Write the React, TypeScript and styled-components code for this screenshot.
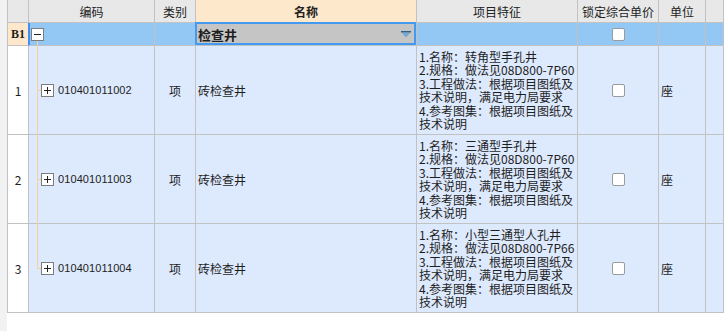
import React from "react";
import styled, { createGlobalStyle, css } from "styled-components";

const GlobalStyle = createGlobalStyle`
  html, body {
    margin: 0;
    padding: 0;
    background: #ffffff;
    overflow: hidden;
  }
  body {
    font-family: "Noto Sans CJK SC", "Noto Sans", sans-serif;
    font-size: 12px;
    color: #1e1e1e;
  }
`;

const LINE = "#c2c2c2";
const TREE = "#f9cf9c";

type Tone = "head" | "accent" | "group" | "body";

const tones: Record<Tone, string> = {
  head: "#e8e8e8",
  accent: "#fde8cb",
  group: "#93c8f5",
  body: "#dde9fc",
};

const Page = styled.div`
  display: flex;
  height: 331px;
`;

const Gutter = styled.div`
  width: 7px;
  background: #f2f2f2;
`;

const Sheet = styled.div`
  flex: 1;
  align-self: flex-start;
  display: grid;
  grid-template-columns: 22px 126px 41px 221px 161px 81px 47px 1fr;
  grid-template-rows: 23px 23px repeat(3, 89px);
`;

const Cell = styled.div<{ $tone: Tone; $center?: boolean }>`
  box-sizing: border-box;
  min-width: 0;
  display: flex;
  align-items: center;
  justify-content: ${(p) => (p.$center ? "center" : "flex-start")};
  background: ${(p) => tones[p.$tone]};
  border-right: 1px solid ${LINE};
  border-bottom: 1px solid ${LINE};
`;

const HeadCell = styled(Cell)<{ $bold?: boolean }>`
  font-size: 12px;
  color: #222;
  font-weight: ${(p) => (p.$bold ? 700 : 400)};
`;

const RowHead = styled(Cell)<{ $current?: boolean }>`
  border-left: 1px solid ${LINE};
  ${(p) =>
    p.$current &&
    css`
      border-right-color: #3d8ff5;
      font-family: "Liberation Serif", "DejaVu Serif", serif;
      font-weight: 700;
      font-size: 12px;
    `}
`;

const CodeCell = styled(Cell)<{ $group?: boolean; $last?: boolean }>`
  position: relative;
  gap: 4px;
  padding-left: ${(p) => (p.$group ? "2px" : "12px")};
  ${(p) =>
    p.$group
      ? css`
          box-shadow: inset 1px 0 0 #3d8ff5;
          &::after {
            content: "";
            position: absolute;
            left: 8px;
            top: 17px;
            bottom: -1px;
            width: 1px;
            background: ${TREE};
          }
        `
      : css`
          &::before {
            content: "";
            position: absolute;
            left: 8px;
            top: 0;
            bottom: ${p.$last ? "50%" : "-1px"};
            width: 1px;
            background: ${TREE};
          }
          &::after {
            content: "";
            position: absolute;
            left: 8px;
            top: 50%;
            width: 4px;
            height: 1px;
            background: ${TREE};
          }
        `}
`;

const CodeText = styled.span`
  font-family: "Liberation Sans", Arial, sans-serif;
  font-size: 11px;
  letter-spacing: 0.1px;
`;

const NameCell = styled(Cell)<{ $editing?: boolean }>`
  position: relative;
  padding-left: 2px;
  ${(p) =>
    p.$editing &&
    css`
      background: #c5c5c5;
      font-weight: 700;
      font-size: 13px;
      &::after {
        content: "";
        position: absolute;
        left: -1px;
        top: -1px;
        right: 0;
        bottom: 0;
        border: 2px solid #4499f0;
      }
    `}
`;

const DropArrow = styled.svg`
  margin-left: auto;
  margin-right: 5px;
`;

const FeatureCell = styled(Cell)`
  padding: 0 2px;
  font-size: 12px;
  line-height: 13.5px;
`;

const FeatureText = styled.div`
  width: 100%;
  word-break: break-all;
`;

const UnitCell = styled(Cell)`
  padding-left: 2px;
`;

const Check = styled.span`
  width: 13px;
  height: 13px;
  box-sizing: border-box;
  background: #ffffff;
  border: 1px solid #9b9b9b;
  border-radius: 2px;
`;

const TreeBox: React.FC<{ open?: boolean }> = ({ open }) => (
  <svg width="13" height="13" viewBox="0 0 13 13" style={{ flex: "none", position: "relative", zIndex: 1 }}>
    <rect x="0.5" y="0.5" width="12" height="12" fill="#ffffff" stroke="#7d7d7d" />
    <line x1="3" y1="6.5" x2="10" y2="6.5" stroke="#222" />
    {!open && <line x1="6.5" y1="3" x2="6.5" y2="10" stroke="#222" />}
  </svg>
);

const items = [
  {
    no: "1",
    code: "010401011002",
    feature: [
      "1.名称：转角型手孔井",
      "2.规格：做法见08D800-7P60",
      "3.工程做法：根据项目图纸及技术说明，满足电力局要求",
      "4.参考图集：根据项目图纸及技术说明",
    ],
  },
  {
    no: "2",
    code: "010401011003",
    feature: [
      "1.名称：三通型手孔井",
      "2.规格：做法见08D800-7P60",
      "3.工程做法：根据项目图纸及技术说明，满足电力局要求",
      "4.参考图集：根据项目图纸及技术说明",
    ],
  },
  {
    no: "3",
    code: "010401011004",
    feature: [
      "1.名称：小型三通型人孔井",
      "2.规格：做法见08D800-7P66",
      "3.工程做法：根据项目图纸及技术说明，满足电力局要求",
      "4.参考图集：根据项目图纸及技术说明",
    ],
  },
];

export default function App() {
  return (
    <>
      <GlobalStyle />
      <Page>
        <Gutter />
        <Sheet>
          <HeadCell $tone="head" style={{ borderLeft: `1px solid ${LINE}` }} />
          <HeadCell $tone="head" $center>编码</HeadCell>
          <HeadCell $tone="head" $center>类别</HeadCell>
          <HeadCell $tone="accent" $center $bold>名称</HeadCell>
          <HeadCell $tone="head" $center>项目特征</HeadCell>
          <HeadCell $tone="head" $center>锁定综合单价</HeadCell>
          <HeadCell $tone="head" $center>单位</HeadCell>
          <HeadCell $tone="head" />

          <RowHead $tone="accent" $center $current>B1</RowHead>
          <CodeCell $tone="group" $group>
            <TreeBox open />
          </CodeCell>
          <Cell $tone="group" />
          <NameCell $tone="group" $editing>
            检查井
            <DropArrow width="10" height="7" viewBox="0 0 10 7">
              <rect x="0" y="0" width="10" height="1.5" fill="#2f5f86" />
              <path d="M1 2 L9 2 L5 6.5 Z" fill="#6fa9d9" />
            </DropArrow>
          </NameCell>
          <Cell $tone="group" />
          <Cell $tone="group" $center>
            <Check />
          </Cell>
          <Cell $tone="group" />
          <Cell $tone="group" />

          {items.map((it, i) => (
            <React.Fragment key={it.no}>
              <RowHead $tone="body" $center style={{ background: "#ffffff" }}>
                {it.no}
              </RowHead>
              <CodeCell $tone="body" $last={i === items.length - 1}>
                <TreeBox />
                <CodeText>{it.code}</CodeText>
              </CodeCell>
              <Cell $tone="body" $center>项</Cell>
              <NameCell $tone="body">砖检查井</NameCell>
              <FeatureCell $tone="body">
                <FeatureText>
                  {it.feature.map((line) => (
                    <div key={line}>{line}</div>
                  ))}
                </FeatureText>
              </FeatureCell>
              <Cell $tone="body" $center>
                <Check />
              </Cell>
              <UnitCell $tone="body">座</UnitCell>
              <Cell $tone="body" />
            </React.Fragment>
          ))}
        </Sheet>
      </Page>
    </>
  );
}
